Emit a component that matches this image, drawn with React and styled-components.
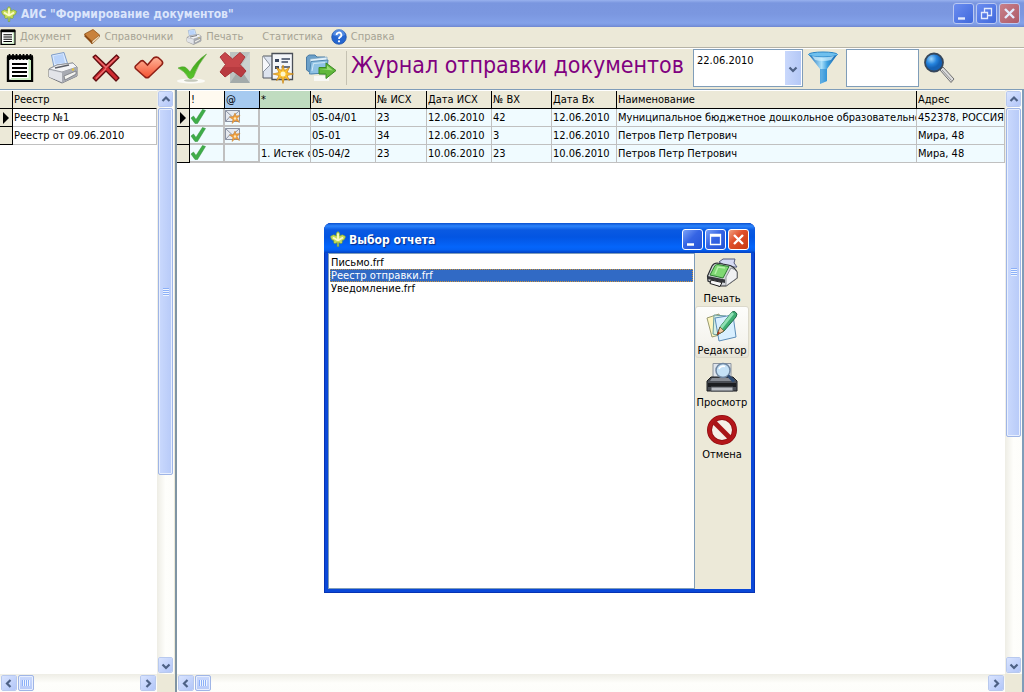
import React, { useState } from "react";
import styled, { createGlobalStyle, css } from "styled-components";

const GlobalStyle = createGlobalStyle`
	* {
		box-sizing: border-box;
	}

	body {
		margin: 0;
		overflow: hidden;
		background: #ece9d8;
		font-family: "DejaVu Sans Condensed", "DejaVu Sans", sans-serif;
		font-size: 11px;
		color: #000;
	}

	button,
	input,
	select {
		font: inherit;
		color: inherit;
		border-radius: 0;
	}
`;

const Window = styled.div`
	display: flex;
	flex-direction: column;
	height: 100vh;
`;

const TitleBar = styled.header`
	display: flex;
	align-items: center;
	gap: 4px;
	height: 27px;
	padding: 0 4px 0 1px;
	background: linear-gradient(#98b1ee 0, #7a96df 3px, #7b97e0 14px, #83a1e9 23px, #7b98e2 25px, #6f86cf 27px);
	color: #dbe5fb;
`;

const TitleText = styled.h1`
	flex: 1;
	margin: 0;
	padding-top: 1px;
	font-size: 12px;
	line-height: 16px;
	font-weight: bold;
	white-space: nowrap;
`;

const CaptionButton = styled.button`
	display: flex;
	flex: none;
	width: 21px;
	height: 21px;
	padding: 0;
	border: 1px solid ${(p) => (p.$dim ? "#b9c8f2" : "#fff")};
	border-radius: 3px;
	background: ${(p) =>
		p.$close
			? p.$dim
				? "linear-gradient(135deg, #c98089, #ad5a68)"
				: "linear-gradient(135deg, #f0a080, #e0502c 40%, #c63a12)"
			: p.$dim
				? "linear-gradient(135deg, #6b8df0, #3f68dc)"
				: "linear-gradient(135deg, #7ba2f8, #3564e4 45%, #2353d6)"};
`;

const CaptionButtons = styled.div`
	display: flex;
	gap: 2px;
`;

const MenuBar = styled.nav`
	display: flex;
	align-items: center;
	gap: 13px;
	height: 21px;
	border-bottom: 1px solid #b5b2a5;
	color: #a6a394;
`;

const MenuItem = styled.button`
	display: flex;
	align-items: center;
	gap: 4px;
	margin: ${(p) => (p.$plain ? "0 -5px 0 6px" : "0")};
	padding: 0;
	border: 0;
	background: none;
	line-height: 16px;
`;

const Toolbar = styled.div`
	display: flex;
	align-items: center;
	height: 42px;
	padding-bottom: 2px;
	border-top: 1px solid #fff;
	border-bottom: 1px solid #7f9db9;
`;

const ToolButton = styled.button`
	display: flex;
	align-items: center;
	justify-content: center;
	flex: none;
	width: 43px;
	height: 38px;
	padding: 0 4px 0 0;
	border: 0;
	background: none;
`;

const Separator = styled.div`
	width: 1px;
	height: 34px;
	margin: 0 4px 0 2px;
	background: #c5c2b2;
`;

const JournalTitle = styled.h2`
	flex: none;
	width: 342px;
	margin: 0;
	padding-bottom: 6px;
	font-size: 23px;
	line-height: 32px;
	font-weight: normal;
	color: #800080;
	white-space: nowrap;
`;

const DateBox = styled.div`
	position: relative;
	flex: none;
	width: 110px;
	height: 38px;
`;

const DateSelect = styled.select`
	appearance: none;
	width: 100%;
	height: 100%;
	padding: 0 20px 16px 3px;
	border: 1px solid #7f9db9;
	background: #fff;
`;

const DateArrow = styled.span`
	position: absolute;
	top: 2px;
	right: 2px;
	bottom: 2px;
	display: flex;
	align-items: center;
	justify-content: center;
	width: 16px;
	background: linear-gradient(90deg, #c9d8fc, #b4c8f6);
	pointer-events: none;
`;

const SearchInput = styled.input`
	flex: none;
	width: 73px;
	height: 38px;
	padding: 0 4px;
	border: 1px solid #7f9db9;
	background: #fff;
`;

const Panes = styled.main`
	display: flex;
	flex: 1;
	min-height: 0;
	border-right: 2px solid #7f9db9;
`;

const Pane = styled.section`
	display: grid;
	grid-template: minmax(0, 1fr) 18px / minmax(0, 1fr) 17px;
	flex: ${(p) => (p.$side ? "0 0 174px" : "1 1 0")};
	min-width: 0;
`;

const Splitter = styled.div`
	width: 3px;
	border-left: 1px solid #ece9d8;
	background: #7f94a3;
`;

const GridArea = styled.div`
	overflow: hidden;
	padding-top: 1px;
	background: #fff;
`;

const Grid = styled.table`
	width: 100%;
	table-layout: fixed;
	border-collapse: separate;
	border-spacing: 0;
	line-height: 16px;
`;

const headerTints = { mark: "#fffaf0", mail: "#a6caf0", note: "#c0dcc0" };

const HeadCell = styled.th`
	height: 18px;
	padding: 1px 0 0 1px;
	border-right: 1px solid ${(p) => (p.$last ? "#ece9d8" : "#000")};
	border-bottom: 1px solid #000;
	background: ${(p) => headerTints[p.$tint] || "#ece9d8"};
	font-weight: normal;
	text-align: left;
	white-space: nowrap;
	overflow: hidden;
`;

const Cell = styled.td`
	height: 18px;
	padding: 1px 0 0 1px;
	border-right: 1px solid #c0c0c0;
	border-bottom: 1px solid #c0c0c0;
	background: ${(p) => (p.$plain ? "#fff" : "#f0fbff")};
	white-space: nowrap;
	overflow: hidden;

	${(p) =>
		p.$framed &&
		css`
			padding: 0;
			border-width: 0 2px 2px 0;
		`}

	svg {
		display: block;
	}
`;

const RowMarker = styled.th`
	height: 18px;
	padding: 0;
	border-right: 1px solid #000;
	border-bottom: 1px solid #000;
	background: #ece9d8;

	svg {
		display: block;
		margin: 0 auto;
	}
`;

const ScrollTrack = styled.div`
	display: flex;
	flex-direction: ${(p) => (p.$vertical ? "column" : "row")};
	min-width: 0;
	min-height: 0;
	padding: 1px;
	background: linear-gradient(${(p) => (p.$vertical ? "90deg" : "180deg")}, #eeede5, #fefefb 50%, #fdfdfa);
`;

const ScrollButton = styled.button`
	display: flex;
	align-items: center;
	justify-content: center;
	flex: none;
	width: ${(p) => (p.$vertical ? "15px" : "16px")};
	height: 16px;
	padding: 0;
	border: 1px solid #fff;
	border-radius: 2px;
	outline: 1px solid #b8c9ee;
	outline-offset: -1px;
	background: linear-gradient(135deg, #d9e4ff, #b2c6f8);
`;

const ScrollRest = styled.div`
	display: flex;
	flex-direction: ${(p) => (p.$vertical ? "column" : "row")};
	flex: 1;
	min-width: 0;
	min-height: 0;
	padding: ${(p) => (p.$vertical ? "1px 0" : "0 1px")};
`;

const Thumb = styled.div`
	display: flex;
	align-items: center;
	justify-content: center;
	border: 1px solid #9fb5e6;
	border-radius: 2px;
	box-shadow: inset 0 0 0 1px #e8effe;
	background: linear-gradient(${(p) => (p.$vertical ? "90deg" : "180deg")}, #cad9fd, #b7caf8);
	${(p) => (p.$vertical ? "width: 15px;" : "width: 16px; height: 16px;")}
`;

const Corner = styled.div`
	background: #ece9d8;
`;

const Dialog = styled.section`
	position: absolute;
	top: 223px;
	left: 324px;
	display: flex;
	flex-direction: column;
	width: 431px;
	height: 370px;
	padding: 0 4px 4px;
	border-radius: 7px 7px 0 0;
	background: #0a48d8;
	box-shadow: inset 0 0 0 1px #0734b4;
	overflow: hidden;
`;

const DialogTitleBar = styled.header`
	display: flex;
	align-items: center;
	gap: 3px;
	flex: none;
	height: 30px;
	margin: 0 -4px;
	padding: 2px 6px 0 6px;
	background: linear-gradient(#0a50d0 0, #2c84fb 3px, #0a5ae2 7px, #0355e2 14px, #0465fb 24px, #0460f2 27px, #0441c0 30px);
	color: #fff;
	text-shadow: 1px 1px 1px #0b2a86;
`;

const DialogBody = styled.div`
	display: flex;
	flex: 1;
	min-height: 0;
`;

const ReportList = styled.select`
	flex: 1;
	min-width: 0;
	padding: 2px 1px;
	border: 1px solid #7f9db9;
	outline: 0;
	background: #fff;
	overflow: hidden;

	option {
		height: 13px;
		min-height: 13px;
		padding: 0 1px;
		line-height: 13px;
	}

	option:checked {
		background: #316ac5 linear-gradient(#316ac5, #316ac5);
		color: #fff;
		-webkit-text-fill-color: #fff;
		outline: 1px dotted #ce953a;
		outline-offset: -1px;
	}
`;

const DialogActions = styled.div`
	display: flex;
	flex-direction: column;
	width: 56px;
	padding: 1px 2px 1px 0;
	background: #ece9d8;
`;

const ActionButton = styled.button`
	display: flex;
	flex-direction: column;
	align-items: center;
	justify-content: space-between;
	height: 52px;
	padding: 3px 0 0;
	border: 1px solid ${(p) => (p.$hot ? "#dcd9cb" : "transparent")};
	border-radius: 3px;
	background: ${(p) => (p.$hot ? "linear-gradient(#fdfdfb, #f5f4ee 70%, #e6e3d6)" : "none")};
	line-height: 12px;
	white-space: nowrap;
`;

function LeafIcon() {
	return (
		<svg width="16" height="16" viewBox="0 0 16 16">
			<path
				d="M8 0.500Q10.500 2 9.800 5 12.500 2.500 15.500 5.500 15.200 9 12 9.800 13 11.500 11.500 12.500 9.500 12.500 8.800 11.500V15.500H7.200V11.500Q6.500 12.500 4.500 12.500 3 11.500 4 9.800 0.800 9 0.500 5.500 3.500 2.500 6.200 5 5.500 2 8 0.500Z"
				fill="#c8dc58"
				stroke="#6c9a38"
				strokeWidth="0.600"
			/>
			<path d="M8 2.500V10M8 9.500 3 6.500M8 9.500 13 6.500" stroke="#fbfbc8" strokeWidth="1.800" fill="none" />
		</svg>
	);
}

function NotepadIcon({ size = 28 }) {
	return (
		<svg width={size} height={size} viewBox="0 0 28 28">
			<path d="M2 4H26V27H2Z" fill="#fff" stroke="#000" strokeWidth="2.400" />
			<path d="M22.500 5H25V26H5V24H22.500Z" fill="#c9eec0" />
			<path d="M1 3H27" stroke="#000" strokeWidth="3.500" />
			<path d="M3.500 0V6M7 0V6M10.500 0V6M14 0V6M17.500 0V6M21 0V6M24.500 0V6" stroke="#000" strokeWidth="1.700" />
			<path d="M6 10H21M6 14H21M6 18H21M6 22H21" stroke="#000" strokeWidth="1.900" />
		</svg>
	);
}

function PrinterIcon({ size = 32 }) {
	return (
		<svg width={size} height={size} viewBox="0 0 32 32">
			<path d="M7 15 4.500 3 17 0.500 21 13Z" fill="#dcebff" stroke="#7e9cc8" />
			<path d="M8 12 6.500 4 16 2 18 11Z" fill="#b9d3fa" />
			<path d="M2 17 10 13 26 11 30 15V24L15 31 2 25Z" fill="#c9ccd2" stroke="#74777e" />
			<path d="M2 17 10 13 26 11 30 15 15 20Z" fill="#f3f4f6" stroke="#8d9097" strokeWidth="0.800" />
			<path d="M15 20V31L30 24V15Z" fill="#a8abb2" />
			<path d="M2 18 15 21V30L2 25Z" fill="#e2e4e8" />
			<path d="M8 16 22 13" stroke="#5d6068" strokeWidth="1.600" />
			<path d="M17 24 29 19V22L18 28Z" fill="#f4f4f0" stroke="#6c6f74" strokeWidth="0.700" />
			<circle cx="26" cy="17.500" r="1.200" fill="#e3c33c" />
		</svg>
	);
}

function RedCrossIcon() {
	return (
		<svg width="30" height="30" viewBox="0 0 30 30">
			<path
				d="M2 4 4.500 2 15 12 25.500 2 28 4.500 18 14.500 28 25 25 28 15 18 5 28 2 25 12 14.500Z"
				fill="#cf2a30"
				stroke="#5e0d10"
				strokeWidth="1.200"
				strokeLinejoin="round"
			/>
			<path d="M4 4 15 14.500 26 4M15 15.500 5 25.500" fill="none" stroke="#ea7474" strokeWidth="1.200" />
		</svg>
	);
}

function RedCheckIcon() {
	return (
		<svg width="32" height="30" viewBox="0 0 32 30">
			<defs>
				<linearGradient id="redCheck" x2="0" y2="1">
					<stop offset="0" stopColor="#ffb59a" />
					<stop offset="1" stopColor="#f4502f" />
				</linearGradient>
			</defs>
			<path
				d="M2.500 13 8 8Q9.500 7 11 8.500L14.500 12 20.500 5Q23 3.500 25 4.500L28.500 7.500Q30.500 9.500 29 11.500L16 24Q14 25.500 12 24L2.500 15.500Q1.500 14 2.500 13Z"
				fill="url(#redCheck)"
				stroke="#8f2016"
				strokeWidth="1.600"
			/>
		</svg>
	);
}

function GreenCheckIcon() {
	return (
		<svg width="32" height="32" viewBox="0 0 32 32">
			<defs>
				<linearGradient id="greenCheck" x2="0" y2="1">
					<stop offset="0" stopColor="#3f9d1c" />
					<stop offset="1" stopColor="#58c62c" />
				</linearGradient>
			</defs>
			<ellipse cx="15" cy="29" rx="14" ry="2.500" fill="#fbfbf7" />
			<ellipse cx="15" cy="28.500" rx="7" ry="1.300" fill="#c4c8bb" />
			<path d="M2 16Q6 14 9 15 12 17 14 20 20 9 30.500 2 22 12 17.500 25 15 28 12.500 26 9 19 2 16Z" fill="url(#greenCheck)" stroke="#4aa124" strokeWidth="0.500" />
		</svg>
	);
}

function RejectIcon() {
	return (
		<svg width="34" height="34" viewBox="0 0 34 34">
			<path d="M12 1H32V32H12Z" fill="#bcc3c1" />
			<path d="M12 32 22 17 32 32Z" fill="#a3abaa" />
			<path d="M32 1 22 17 32 32Z" fill="#cbd2d0" />
			<path
				d="M2 6 7 1.500 14.500 8 22 1.500 27 6 22 13.500 28 20 23 26 15 20 7 26 2 21 7.500 13.500Z"
				fill="#c7464a"
				stroke="#a8383d"
			/>
			<path d="M5 16 25 16 28 20 23 26 15 20 7 26 2 21Z" fill="#a92f35" opacity="0.500" />
		</svg>
	);
}

function CardsIcon() {
	return (
		<svg width="32" height="32" viewBox="0 0 32 32">
			<path d="M1 4H13V26H1Z" fill="#dde4ef" stroke="#555b64" />
			<path d="M1 4 8 13 1 20" fill="#f6f8fb" stroke="#8a929e" />
			<path d="M10 1.500H30.500V27.500H10Z" fill="#f4f6f9" stroke="#4a4f57" strokeWidth="1.300" />
			<path d="M13 7H17V10H13ZM13 14H17V17H13Z" fill="#39465e" />
			<path d="M19.500 7H28M19.500 10H26M19.500 15H28" stroke="#39465e" strokeWidth="1.700" />
			<path
				d="M21 13 22.500 18.500 27.500 15.500 25 20.500 31.500 22 25 23.500 27.500 28.500 22.500 25.500 21 31.500 19.500 25.500 14.500 28.500 17 23.500 11 22 17 20.500 14.500 15.500 19.500 18.500Z"
				fill="#fbc02d"
				stroke="#c9861b"
				strokeWidth="0.700"
			/>
			<circle cx="21" cy="22" r="2.500" fill="#fff7c9" />
		</svg>
	);
}

function FolderIcon() {
	return (
		<svg width="32" height="32" viewBox="0 0 32 32">
			<path d="M9 29H24V24H9Z" fill="#f8f8f4" />
			<path d="M1.500 5 4 3H10L12 5H20V22L6 21 1.500 18Z" fill="#6ba0c9" stroke="#4b7ba3" />
			<path d="M5 7 22 5V20L6 22Z" fill="#e2f1fa" stroke="#7ba3c0" strokeWidth="0.700" />
			<path d="M4.500 22 6 9.500 23 8 21.500 21Z" fill="#8fc2e4" stroke="#4e87b2" />
			<path d="M7 19 8.500 11.500 20 10.500" fill="none" stroke="#cfe8f7" />
			<path d="M14 15.500H21V11L31 18.500 21 26.500V22H14Z" fill="#61b83b" stroke="#3b8b24" />
			<path d="M15 17H22V13.500L28 18.500Z" fill="#9bdc74" />
		</svg>
	);
}

function FunnelIcon() {
	return (
		<svg width="32" height="34" viewBox="0 0 32 34">
			<defs>
				<linearGradient id="funnel">
					<stop offset="0" stopColor="#1c6db5" />
					<stop offset="0.450" stopColor="#a9e0fb" />
					<stop offset="0.650" stopColor="#3fa2e0" />
					<stop offset="1" stopColor="#1560a8" />
				</linearGradient>
			</defs>
			<path d="M2 4 13 18V33L20 30V18L30 4Z" fill="url(#funnel)" />
			<path d="M13 18V33L20 30V18Z" fill="#2a8bd2" opacity="0.600" />
			<ellipse cx="16" cy="3.500" rx="14.500" ry="2.500" fill="#6fc0ee" stroke="#2a86c6" />
			<path d="M5 5Q16 7.500 27 5L24 9Q16 11 8 9Z" fill="#d2f0fd" opacity="0.700" />
		</svg>
	);
}

function MagnifierIcon() {
	return (
		<svg width="32" height="32" viewBox="0 0 32 32">
			<defs>
				<radialGradient id="lens" cx="0.350" cy="0.300">
					<stop offset="0" stopColor="#9fd6fb" />
					<stop offset="0.600" stopColor="#2584de" />
					<stop offset="1" stopColor="#1561b4" />
				</radialGradient>
			</defs>
			<path d="M17 18 20 15 31 27 28 30.500Z" fill="#dcdcdc" stroke="#6f6f6f" />
			<path d="M19 18 28.500 28.500" stroke="#8f8f8f" />
			<circle cx="11" cy="10.500" r="9" fill="url(#lens)" stroke="#37475a" strokeWidth="1.800" />
		</svg>
	);
}

function BookIcon() {
	return (
		<svg width="16" height="16" viewBox="0 0 16 16">
			<path d="M0.500 5 9 0.500 15.500 6 8 14.500Z" fill="#c9823c" stroke="#8f5219" strokeWidth="0.800" />
			<path d="M0.500 5 8 12V15L0.500 7.500Z" fill="#8a4a14" />
			<path d="M8 12 15.500 6V8L8 15Z" fill="#f1dcb8" stroke="#8f5219" strokeWidth="0.600" />
		</svg>
	);
}

function HelpIcon() {
	return (
		<svg width="16" height="16" viewBox="0 0 16 16">
			<circle cx="8" cy="8" r="7.300" fill="#2566d0" stroke="#1b4da3" strokeWidth="0.700" />
			<path d="M2 6A6 6 0 0 1 14 6Q8 9 2 6Z" fill="#6ea2ee" opacity="0.600" />
			<path d="M5.600 6A2.400 2.400 0 1 1 9 8.100Q8 8.600 8 10" fill="none" stroke="#fff" strokeWidth="1.800" />
			<circle cx="8" cy="12.300" r="1.100" fill="#fff" />
		</svg>
	);
}

function TickIcon() {
	return (
		<svg width="16" height="16" viewBox="0 0 16 16">
			<path d="M1 9 3.500 7 6 10.500 12.500 0.500 15.500 1.500 7.500 14.500H5Z" fill="#3fae49" stroke="#2f8f3a" strokeWidth="0.500" />
		</svg>
	);
}

function MailIcon() {
	return (
		<svg width="16" height="16" viewBox="0 0 16 16">
			<path d="M0.500 1.500H14.500V12.500H0.500Z" fill="#e6eaf0" stroke="#8b93a3" />
			<path d="M0.500 1.500 7.500 8 14.500 1.500M0.500 12.500 5.500 7" fill="none" stroke="#8b93a3" />
			<path d="M10 4 11 7 15 6.500 12 9.500 14.500 13.500 10.500 11.500 7 14.500 8 10.500 4.500 8 8.500 7.500Z" fill="#f0a040" stroke="#c97c22" strokeWidth="0.500" />
			<circle cx="10" cy="9.500" r="1.200" fill="#fde9b8" />
		</svg>
	);
}

function GreenPrinterIcon() {
	return (
		<svg width="32" height="30" viewBox="0 0 32 30">
			<path d="M13 4 17 1 29 1 28 5 31 9 22 9Z" fill="#d5d9f2" stroke="#555c7e" />
			<path d="M1.500 18 6 8Q8 5 11 5L22 7Q28 8 31 14V20L20 28 13 28 2 23Z" fill="#d4d6da" stroke="#2b2d31" strokeWidth="1.200" />
			<path d="M20 19 25 10Q29 11 31 14V20L20 28Z" fill="#f0f1f3" stroke="#6a6d74" strokeWidth="0.700" />
			<path d="M4 17 9 7.500Q10 6.500 12 6.500L23 8.500 17 20Z" fill="#7fd873" stroke="#2f7d33" />
			<path d="M9 16 12 9 19 10" fill="none" stroke="#b6f0aa" strokeWidth="1.500" />
			<path d="M1.500 18 19 21.500V25L1.500 21Z" fill="#34363b" />
			<path d="M5 22 16 24.500 14 28.500 4 25.500Z" fill="#f6f6f6" stroke="#222" />
		</svg>
	);
}

function EditorIcon() {
	return (
		<svg width="32" height="32" viewBox="0 0 32 32">
			<path d="M1 8 13 4 17 24 6 27Z" fill="#fdf6c0" stroke="#9a9a70" />
			<path d="M8 5 20 6 18 27 7 24Z" fill="#d7f0e4" stroke="#6b9c9c" />
			<path d="M9 8 27 5 30 27 13 31Z" fill="#d8efff" stroke="#5c8db8" />
			<path d="M11 25 14 17 26 2Q29 0 31 4L30 7 18 21Z" fill="#3fae73" stroke="#216b45" />
			<path d="M14 17 26 2 28 4 16 19Z" fill="#8fe0b3" />
			<path d="M11 25 14 17 18 21Z" fill="#f0c9a0" stroke="#6d4a2a" strokeWidth="0.700" />
			<path d="M11 25 12.300 21.500 14 23Z" fill="#b0301c" />
		</svg>
	);
}

function PreviewIcon() {
	return (
		<svg width="32" height="32" viewBox="0 0 32 32">
			<path d="M7 1.500H25V18H7Z" fill="#dfe5ec" stroke="#8c949e" />
			<path d="M5 15H27L31 19V29H1V19Z" fill="#4a4e55" stroke="#1b1d20" />
			<path d="M6 16H26L28 19H4Z" fill="#878c94" />
			<path d="M2 21H30V25H2Z" fill="#1c1e21" />
			<path d="M5 25H27V29H5Z" fill="#b9bdc3" stroke="#4d5157" />
			<circle cx="17" cy="8.500" r="7" fill="#bfe0f8" fillOpacity="0.850" stroke="#6f86a0" strokeWidth="1.500" />
			<path d="M13 7A4.500 4.500 0 0 1 19 4.500" stroke="#fff" strokeWidth="1.600" fill="none" />
			<path d="M22 13.500 28 19.500" stroke="#2e4c74" strokeWidth="3" />
		</svg>
	);
}

function CancelIcon() {
	return (
		<svg width="32" height="32" viewBox="0 0 32 32">
			<circle cx="16" cy="16" r="12.500" fill="#f5efe8" stroke="#8e0e12" strokeWidth="5" />
			<circle cx="16" cy="16" r="12.500" fill="none" stroke="#b4161a" strokeWidth="3.500" />
			<path d="M7.500 7.500 24.500 24.500" stroke="#a81418" strokeWidth="5" />
		</svg>
	);
}

const captionPaths = {
	minimize: "M4 14.500H11",
	restore: "M7.500 8V4.500H14.500V11.500H11M4.500 8.500H10.500V14.500H4.500Z",
	maximize: "M4.500 4.500H14.500V14.500H4.500ZM4.500 6H14.500",
	close: "M5 5 14 14M14 5 5 14",
};

function Caption({ kind, label, dim }) {
	const bold = kind === "minimize" || kind === "close";
	return (
		<CaptionButton aria-label={label} $close={kind === "close"} $dim={dim}>
			<svg width="19" height="19" viewBox="0 0 19 19" fill="none" stroke={dim ? "#e4ebfc" : "#fff"} strokeWidth={bold ? 2.4 : 1.3}>
				<path d={captionPaths[kind]} />
			</svg>
		</CaptionButton>
	);
}

const chevronPaths = {
	up: "M1.500 6 5 2.500 8.500 6",
	down: "M1.500 3.500 5 7 8.500 3.500",
	left: "M6.500 1 3 4.500 6.500 8",
	right: "M3.500 1 7 4.500 3.500 8",
};

function Chevron({ dir }) {
	return (
		<svg width="10" height="9" viewBox="0 0 10 9" fill="none" stroke="#4d6185" strokeWidth="2.200">
			<path d={chevronPaths[dir]} />
		</svg>
	);
}

function ScrollBar({ vertical, size }) {
	return (
		<ScrollTrack $vertical={vertical}>
			<ScrollButton $vertical={vertical} aria-label="Назад">
				<Chevron dir={vertical ? "up" : "left"} />
			</ScrollButton>
			<ScrollRest $vertical={vertical}>
				<Thumb $vertical={vertical} style={vertical ? { height: size } : undefined}>
					<svg width="8" height="8" viewBox="0 0 8 8" stroke="#eef4fe">
						<path d={vertical ? "M1 1.500H7M1 3.500H7M1 5.500H7M1 7.500H7" : "M1.500 1V7M3.500 1V7M5.500 1V7M7.500 1V7"} />
						<path
							d={vertical ? "M1 0.500H7M1 2.500H7M1 4.500H7M1 6.500H7" : "M0.500 1V7M2.500 1V7M4.500 1V7M6.500 1V7"}
							stroke="#8cb0f8"
						/>
					</svg>
				</Thumb>
			</ScrollRest>
			<ScrollButton $vertical={vertical} aria-label="Вперёд">
				<Chevron dir={vertical ? "down" : "right"} />
			</ScrollButton>
		</ScrollTrack>
	);
}

function Marker({ current }) {
	return (
		<RowMarker scope="row" aria-label={current ? "Текущая запись" : "Запись"}>
			{current && (
				<svg width="8" height="12" viewBox="0 0 8 12">
					<path d="M1 0 7 6 1 12Z" />
				</svg>
			)}
		</RowMarker>
	);
}

const menu = [
	{ label: "Документ", icon: <NotepadIcon size={16} /> },
	{ label: "Справочники", icon: <BookIcon /> },
	{ label: "Печать", icon: <PrinterIcon size={16} /> },
	{ label: "Статистика" },
	{ label: "Справка", icon: <HelpIcon /> },
];

const tools = [
	{ label: "Новый документ", icon: <NotepadIcon /> },
	{ label: "Печать", icon: <PrinterIcon /> },
	{ label: "Удалить", icon: <RedCrossIcon /> },
	{ label: "Отметить", icon: <RedCheckIcon /> },
	{ label: "Отправлено", icon: <GreenCheckIcon /> },
	{ label: "Отменить отправку", icon: <RejectIcon /> },
	{ label: "Карточки", icon: <CardsIcon /> },
	{ label: "Переместить", icon: <FolderIcon /> },
];

const registers = ["Реестр №1", "Реестр от 09.06.2010"];

const columns = [
	{ title: "!", width: 35, tint: "mark" },
	{ title: "@", width: 35, tint: "mail" },
	{ title: "*", width: 51, tint: "note" },
	{ title: "№", width: 65 },
	{ title: "№ ИСХ", width: 51 },
	{ title: "Дата ИСХ", width: 65 },
	{ title: "№ ВХ", width: 60 },
	{ title: "Дата Вх", width: 65 },
	{ title: "Наименование" },
	{ title: "Адрес", width: 88 },
];

const letters = [
	{
		mail: true,
		cells: ["", "05-04/01", "23", "12.06.2010", "42", "12.06.2010", "Муниципальное  бюджетное дошкольное образовательно", "452378, РОССИЯ"],
	},
	{ mail: true, cells: ["", "05-01", "34", "12.06.2010", "3", "12.06.2010", "Петров Петр Петрович", "Мира, 48"] },
	{ mail: false, cells: ["1. Истек с", "05-04/2", "23", "10.06.2010", "23", "10.06.2010", "Петров Петр Петрович", "Мира, 48"] },
];

const reports = ["Письмо.frf", "Реестр отправки.frf", "Уведомление.frf"];

const actions = [
	{ label: "Печать", icon: <GreenPrinterIcon /> },
	{ label: "Редактор", icon: <EditorIcon />, hot: true },
	{ label: "Просмотр", icon: <PreviewIcon /> },
	{ label: "Отмена", icon: <CancelIcon /> },
];

function RegisterGrid() {
	return (
		<Grid>
			<colgroup>
				<col width="13" />
				<col />
			</colgroup>
			<thead>
				<tr>
					<HeadCell aria-label="Указатель" />
					<HeadCell $last>Реестр</HeadCell>
				</tr>
			</thead>
			<tbody>
				{registers.map((name, i) => (
					<tr key={name}>
						<Marker current={i === 0} />
						<Cell $plain>{name}</Cell>
					</tr>
				))}
			</tbody>
		</Grid>
	);
}

function LetterGrid() {
	return (
		<Grid>
			<colgroup>
				<col width="13" />
				{columns.map((c) => (
					<col key={c.title} width={c.width} />
				))}
			</colgroup>
			<thead>
				<tr>
					<HeadCell aria-label="Указатель" />
					{columns.map((c, i) => (
						<HeadCell key={c.title} $tint={c.tint} $last={i === columns.length - 1}>
							{c.title}
						</HeadCell>
					))}
				</tr>
			</thead>
			<tbody>
				{letters.map((row, i) => (
					<tr key={i}>
						<Marker current={i === 0} />
						<Cell $framed>
							<TickIcon />
						</Cell>
						<Cell $framed>{row.mail && <MailIcon />}</Cell>
						{row.cells.map((text, j) => (
							<Cell key={j}>{text}</Cell>
						))}
					</tr>
				))}
			</tbody>
		</Grid>
	);
}

function ReportDialog() {
	const [report, setReport] = useState(reports[1]);

	return (
		<Dialog role="dialog" aria-labelledby="report-title">
			<DialogTitleBar>
				<LeafIcon />
				<TitleText as="h2" id="report-title">
					Выбор отчета
				</TitleText>
				<CaptionButtons>
					<Caption kind="minimize" label="Свернуть" />
					<Caption kind="maximize" label="Развернуть" />
					<Caption kind="close" label="Закрыть" />
				</CaptionButtons>
			</DialogTitleBar>
			<DialogBody>
				<ReportList size={20} aria-label="Отчеты" value={report} onChange={(e) => setReport(e.target.value)}>
					{reports.map((name) => (
						<option key={name}>{name}</option>
					))}
				</ReportList>
				<DialogActions>
					{actions.map((a) => (
						<ActionButton key={a.label} $hot={a.hot}>
							{a.icon}
							{a.label}
						</ActionButton>
					))}
				</DialogActions>
			</DialogBody>
		</Dialog>
	);
}

export default function App() {
	return (
		<Window>
			<GlobalStyle />
			<TitleBar>
				<LeafIcon />
				<TitleText>АИС "Формирование документов"</TitleText>
				<CaptionButtons>
					<Caption kind="minimize" label="Свернуть" dim />
					<Caption kind="restore" label="Восстановить" dim />
					<Caption kind="close" label="Закрыть" dim />
				</CaptionButtons>
			</TitleBar>
			<MenuBar>
				{menu.map((m) => (
					<MenuItem key={m.label} $plain={!m.icon}>
						{m.icon}
						{m.label}
					</MenuItem>
				))}
			</MenuBar>
			<Toolbar>
				{tools.map((t) => (
					<ToolButton key={t.label} aria-label={t.label}>
						{t.icon}
					</ToolButton>
				))}
				<Separator />
				<JournalTitle>Журнал отправки документов</JournalTitle>
				<DateBox>
					<DateSelect aria-label="Дата">
						<option>22.06.2010</option>
					</DateSelect>
					<DateArrow>
						<Chevron dir="down" />
					</DateArrow>
				</DateBox>
				<ToolButton aria-label="Фильтр">
					<FunnelIcon />
				</ToolButton>
				<SearchInput aria-label="Поиск" />
				<ToolButton aria-label="Найти">
					<MagnifierIcon />
				</ToolButton>
			</Toolbar>
			<Panes>
				<Pane $side>
					<GridArea>
						<RegisterGrid />
					</GridArea>
					<ScrollBar vertical size="67%" />
					<ScrollBar />
					<Corner />
				</Pane>
				<Splitter />
				<Pane>
					<GridArea>
						<LetterGrid />
					</GridArea>
					<ScrollBar vertical size="60%" />
					<ScrollBar />
					<Corner />
				</Pane>
			</Panes>
			<ReportDialog />
		</Window>
	);
}
